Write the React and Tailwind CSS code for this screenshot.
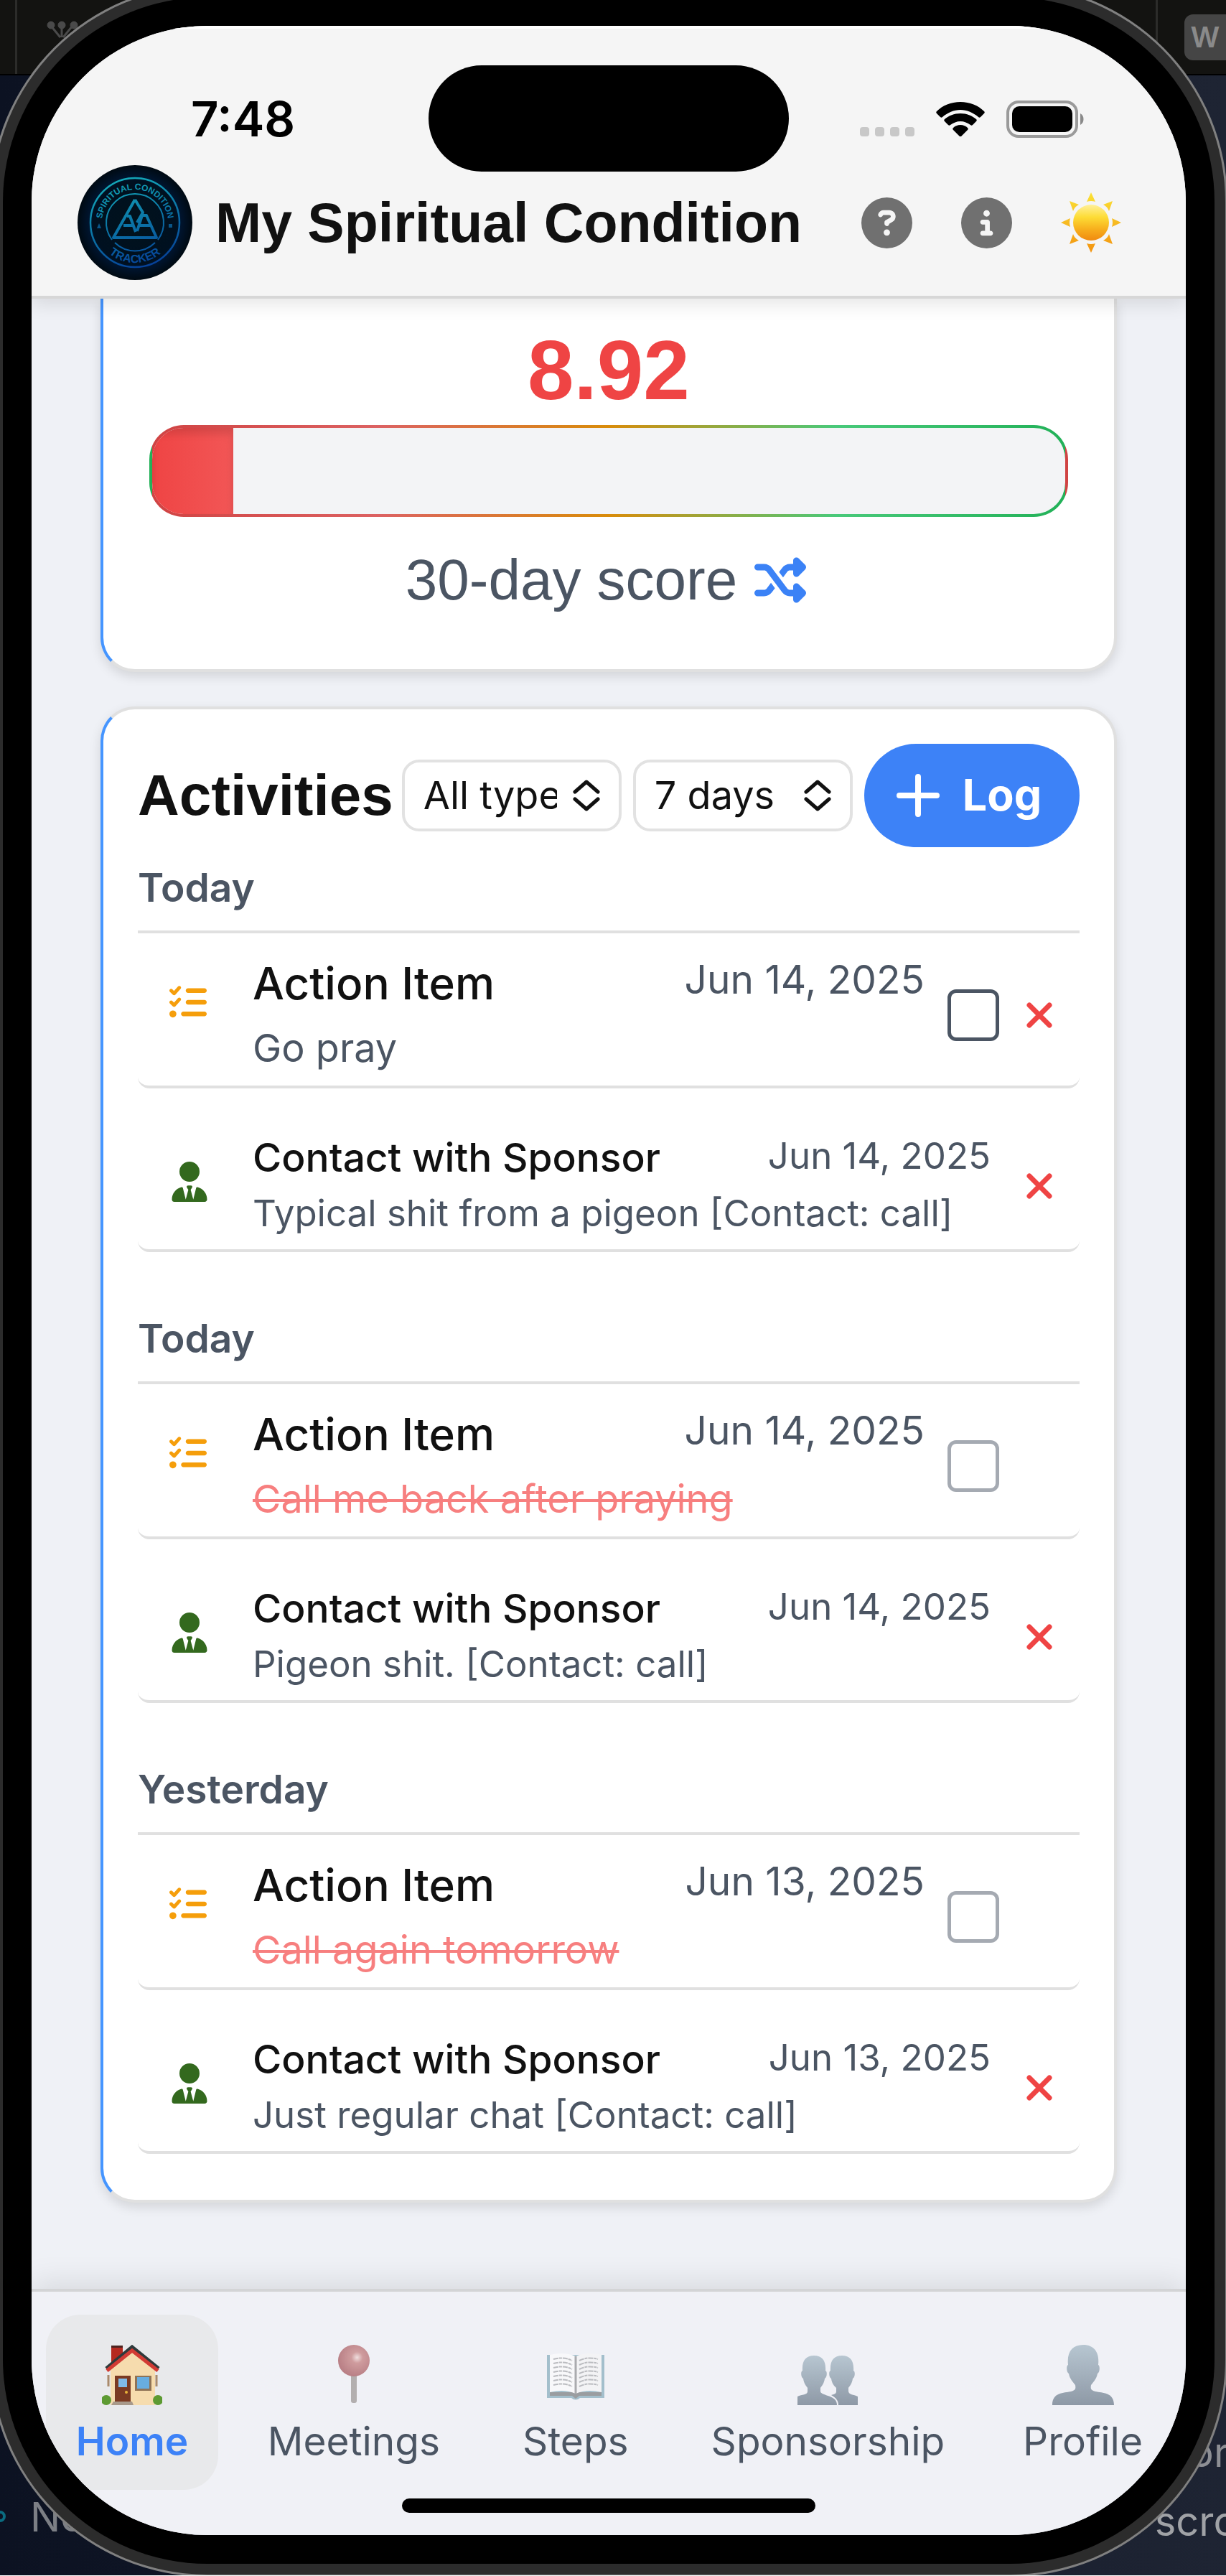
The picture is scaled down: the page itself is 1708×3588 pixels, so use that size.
import React from "react";
import { FaShuffle, FaListCheck, FaUserTie, FaCircleQuestion, FaCircleInfo } from "react-icons/fa6";

const SCORE = 8.92;

const GROUPS = [
  {
    day: "Today",
    action: { text: "Go pray", date: "Jun 14, 2025", done: false },
    contact: { text: "Typical shit from a pigeon [Contact: call]", date: "Jun 14, 2025" },
  },
  {
    day: "Today",
    action: { text: "Call me back after praying", date: "Jun 14, 2025", done: true },
    contact: { text: "Pigeon shit. [Contact: call]", date: "Jun 14, 2025" },
  },
  {
    day: "Yesterday",
    action: { text: "Call again tomorrow", date: "Jun 13, 2025", done: true },
    contact: { text: "Just regular chat [Contact: call]", date: "Jun 13, 2025" },
  },
];

function Logo() {
  return (
    <svg viewBox="0 0 160 160" className="size-40 shrink-0" role="img" aria-label="Spiritual Condition Tracker">
      <defs>
        <radialGradient id="logoBg">
          <stop offset="0" stopColor="#01121c" />
          <stop offset="0.72" stopColor="#001020" />
          <stop offset="0.8" stopColor="#00142e" />
          <stop offset="1" stopColor="#000a12" />
        </radialGradient>
        <linearGradient id="logoLine" gradientUnits="userSpaceOnUse" x1="60" y1="18" x2="100" y2="142">
          <stop offset="0" stopColor="#14a9b8" />
          <stop offset="0.5" stopColor="#0b74a6" />
          <stop offset="1" stopColor="#063f98" />
        </linearGradient>
        <path id="arcTop" d="M34 80 A46 46 0 0 1 126 80" />
        <path id="arcBottom" d="M24 80 A56 56 0 0 0 136 80" />
      </defs>
      <circle cx="80" cy="80" r="80" fill="url(#logoBg)" />
      <g fill="none" stroke="url(#logoLine)">
        <circle cx="80" cy="80" r="62" strokeWidth="2.500" />
        <path d="M48 104 A40 40 0 1 1 112 104 M52 108 A40 40 0 0 0 108 108" strokeWidth="2" />
        <path d="M80 48 L50 101 H110 L96 70 L90 70 L83 92 M80 48 L91 66 L83 80 M69 71 H73 L81 93 M64 84 H77 M87 84 H101" strokeWidth="4" strokeLinejoin="round" />
      </g>
      <g fill="url(#logoLine)" fontFamily="'Liberation Sans', Arial, sans-serif" fontWeight="700">
        <text fontSize="12" textAnchor="middle">
          <textPath href="#arcTop" startOffset="50%">SPIRITUAL CONDITION</textPath>
        </text>
        <text fontSize="16" textAnchor="middle">
          <textPath href="#arcBottom" startOffset="50%">TRACKER</textPath>
        </text>
      </g>
      <path d="M27 88 L30 81 L33 88 Z M127 82 H132 V87 H127 Z" fill="#0a5588" />
    </svg>
  );
}

function WifiIcon() {
  return (
    <svg viewBox="0 0 68 48" className="h-12 w-[68px]" aria-hidden="true">
      <path d="M34 0 C47 0 59 5 67 13 C68 14 68 15 67 16 L62 21 C61 22 60 22 59 21 C52 15 43 11 34 11 C25 11 16 15 9 21 C8 22 7 22 6 21 L1 16 C0 15 0 14 1 13 C9 5 21 0 34 0 Z" />
      <path d="M34 16 C43 16 50 19 56 24 C57 25 57 26 56 27 L51 32 C50 33 49 33 48 32 C44 29 39 27 34 27 C29 27 24 29 20 32 C19 33 18 33 17 32 L12 27 C11 26 11 25 12 24 C18 19 25 16 34 16 Z" />
      <path d="M34 32 C38 32 42 34 44 36 C45 37 45 38 44 39 L35 48 C34.500 48.500 33.500 48.500 33 48 L24 39 C23 38 23 37 24 36 C26 34 30 32 34 32 Z" />
    </svg>
  );
}

function BatteryIcon() {
  return (
    <svg viewBox="0 0 108 52" className="h-[52px] w-[108px]" aria-hidden="true">
      <rect x="2" y="2" width="96" height="48" rx="15" fill="none" stroke="#9a9a9a" strokeWidth="4" />
      <rect x="8" y="8" width="84" height="36" rx="10" />
      <path d="M103 18 C109 21 109 31 103 34 Z" fill="#8a8a8a" />
    </svg>
  );
}

function SunIcon() {
  return (
    <svg viewBox="0 0 84 84" className="size-[84px]" aria-hidden="true">
      <defs>
        <linearGradient id="sunDisc" x1="0" y1="0" x2="0" y2="1">
          <stop offset="0" stopColor="#fff09a" />
          <stop offset="0.35" stopColor="#fddc35" />
          <stop offset="0.7" stopColor="#f7ad1c" />
          <stop offset="1" stopColor="#f08a10" />
        </linearGradient>
        <linearGradient id="sunRay" gradientUnits="userSpaceOnUse" x1="0" y1="0" x2="0" y2="84">
          <stop offset="0" stopColor="#fbe235" />
          <stop offset="1" stopColor="#f3930f" />
        </linearGradient>
      </defs>
      <path
        fill="url(#sunRay)"
        d="M42 0 L48 13 Q42 11 36 13 Z M42 84 L48 71 Q42 73 36 71 Z M0 42 L13 36 Q11 42 13 48 Z M84 42 L71 36 Q73 42 71 48 Z M12 12 L25 17 Q19 20 17 26 Z M72 12 L67 26 Q65 20 59 17 Z M12 72 L17 58 Q19 64 25 67 Z M72 72 L59 67 Q65 64 67 58 Z"
      />
      <circle cx="42" cy="42" r="25" fill="url(#sunDisc)" />
    </svg>
  );
}

function HouseIcon() {
  return (
    <svg viewBox="0 0 84 84" className="size-[84px]" aria-hidden="true">
      <rect x="13" y="2" width="16" height="26" fill="#b5291f" />
      <rect x="13" y="1" width="16" height="3" fill="#4b2420" />
      <path d="M12 34 L43 5 L74 34 V84 H12 Z" fill="#f6dcae" />
      <path d="M9 42 V58 M76 42 V58" stroke="#a98a6c" strokeWidth="3" />
      <path d="M6 33 L42 3 L79 33" fill="none" stroke="#2f3a3b" strokeWidth="5" />
      <path d="M7 36 L42 8 L78 36" fill="none" stroke="#d23b34" strokeWidth="5" />
      <rect x="18" y="43" width="22" height="37" fill="#7a3a22" />
      <rect x="23" y="47" width="12" height="12" fill="#7fbbe8" />
      <circle cx="34" cy="66" r="2" fill="#e8b43a" />
      <rect x="46" y="43" width="23" height="21" fill="#8f7356" />
      <rect x="49" y="45" width="17" height="16" fill="#68addf" />
      <path d="M16 79 H42 L44 84 H13 Z" fill="#a8998a" />
      <circle cx="6" cy="77" r="7" fill="#5d9a32" />
      <circle cx="78" cy="77" r="7" fill="#5d9a32" />
    </svg>
  );
}

function PinIcon() {
  return (
    <svg viewBox="0 0 84 84" className="size-[84px]" aria-hidden="true">
      <defs>
        <radialGradient id="pinHead" cx="0.600" cy="0.400" r="0.600">
          <stop offset="0" stopColor="#f0dede" />
          <stop offset="0.3" stopColor="#cf9c9e" />
          <stop offset="1" stopColor="#b98086" />
        </radialGradient>
      </defs>
      <rect x="38" y="38" width="8" height="43" rx="3" fill="#b3afaf" />
      <circle cx="42" cy="22" r="22" fill="url(#pinHead)" />
    </svg>
  );
}

function BookIcon() {
  const lines = [22, 28, 34, 40, 46, 52, 58];
  return (
    <svg viewBox="0 0 84 84" className="size-[84px]" aria-hidden="true">
      <path d="M2 14 H82 V74 H48 Q42 79 36 74 H2 Z" fill="#a3bfcc" />
      <path d="M6 66 H78 V71 H47 L42 75 L37 71 H6 Z" fill="#9a9da0" />
      <path d="M6 14 Q26 9 42 16 V68 Q26 61 6 66 Z" fill="#f8f8fa" />
      <path d="M78 14 Q58 9 42 16 V68 Q58 61 78 66 Z" fill="#f3f3f5" />
      <path d="M42 16 V68" stroke="#aaabae" strokeWidth="3" />
      <g stroke="#bbbcc0" strokeWidth="2" strokeDasharray="7 1 4 1">
        {lines.map((y) => (
          <path key={y} d={`M11 ${y - 2} Q26 ${y - 6} 37 ${y} M47 ${y} Q58 ${y - 6} 73 ${y - 2}`} fill="none" />
        ))}
      </g>
    </svg>
  );
}

function PeopleGradient({ id }) {
  return (
    <linearGradient id={id} x1="0" y1="0" x2="0" y2="1">
      <stop offset="0" stopColor="#b7c6d1" />
      <stop offset="1" stopColor="#8e99a6" />
    </linearGradient>
  );
}

function PeopleIcon() {
  return (
    <svg viewBox="0 0 84 84" className="size-[84px]" aria-hidden="true">
      <defs><PeopleGradient id="people" /></defs>
      <path fill="url(#people)" d="M23 15 C35 15 40 23 39 36 C42 37 41 46 38 47 C37 54 34 57 32 60 V65 C33 70 46 70 52 76 C54 78 55 81 55 84 H0 V72 C6 69 14 70 14 65 V60 C12 57 9 54 8 47 C5 46 4 37 7 36 C6 23 11 15 23 15 Z" />
      <path fill="url(#people)" d="M62 15 C74 15 79 23 78 36 C81 37 80 46 77 47 C76 54 73 57 71 60 V65 C72 70 78 69 84 72 V84 H57 C57 78 54 74 47 70 C51 69 54 68 54 65 V60 C51 57 48 54 47 47 C44 46 43 37 46 36 C45 23 50 15 62 15 Z" />
    </svg>
  );
}

function PersonIcon() {
  return (
    <svg viewBox="0 0 86 84" className="h-[84px] w-[86px]" aria-hidden="true">
      <defs><PeopleGradient id="person" /></defs>
      <path fill="url(#person)" d="M43 0 C58 0 66 10 64 28 C67 29 66 39 63 40 C62 47 57 52 54 56 C53 62 54 63 60 65 C70 67 86 66 86 84 H0 C0 66 16 67 26 65 C32 63 33 62 32 56 C29 52 24 47 23 40 C20 39 19 29 22 28 C20 10 28 0 43 0 Z" />
    </svg>
  );
}

function CloseButton({ label }) {
  return (
    <button type="button" aria-label={label} className="flex size-16 items-center justify-center">
      <svg viewBox="0 0 36 36" className="size-9" aria-hidden="true">
        <path d="M4 4 L32 32 M32 4 L4 32" stroke="#ef4444" strokeWidth="7" strokeLinecap="round" />
      </svg>
    </button>
  );
}

function FilterSelect({ label, options }) {
  return (
    <label className="relative block min-w-0 flex-1">
      <span className="sr-only">{label}</span>
      <select className="block h-[100px] w-full appearance-none rounded-3xl border-4 border-[#e2e2e2] bg-white pl-[26px] pr-[86px] text-[54px] leading-[80px] text-[#111]">
        {options.map((o) => (
          <option key={o}>{o}</option>
        ))}
      </select>
      <svg viewBox="0 0 38 44" className="pointer-events-none absolute right-[30px] top-7 h-11 w-[38px]" aria-hidden="true">
        <path d="M3 17 L19 3 L35 17 M3 27 L19 41 L35 27" fill="none" stroke="#111" strokeWidth="5" strokeLinecap="round" strokeLinejoin="round" />
      </svg>
    </label>
  );
}

function ActionRow({ item }) {
  return (
    <li className="flex rounded-2xl border-b-4 border-[#e0e0e0] bg-white">
      <FaListCheck className="ml-11 mt-[54px] size-[52px] shrink-0 text-[#f59e0b]" aria-hidden="true" />
      <div className="ml-16 min-w-0 flex-1 pb-3 pt-3">
        <div className="flex items-start justify-between">
          <h4 className="text-[62px] font-medium leading-[84px] text-[#111]">Action Item</h4>
          <time className="text-[55px] leading-[72px] text-[#4b5563]">{item.date}</time>
        </div>
        <p
          className={
            item.done
              ? "mt-2 text-[54px] leading-[80px] text-[#f77f7f] line-through decoration-4"
              : "mt-2 text-[54px] leading-[80px] text-[#4b5563]"
          }
        >
          {item.text}
        </p>
      </div>
      <div className="ml-8 flex w-[184px] shrink-0 items-center gap-6">
        <input
          type="checkbox"
          aria-label={`Mark "${item.text}" as done`}
          className={
            item.done
              ? "size-[72px] appearance-none rounded-xl border-5 border-[#a5aab2] bg-white"
              : "size-[72px] appearance-none rounded-xl border-5 border-[#4b5563] bg-white"
          }
        />
        {!item.done && <CloseButton label={`Delete ${item.text}`} />}
      </div>
    </li>
  );
}

function ContactRow({ item }) {
  return (
    <li className="mt-12 flex rounded-2xl border-b-4 border-[#e0e0e0] bg-white">
      <FaUserTie className="ml-11 mt-[54px] size-14 shrink-0 text-[#33691e]" aria-hidden="true" />
      <div className="ml-[60px] min-w-0 flex-1 pb-3 pt-2">
        <div className="flex items-start justify-between">
          <h4 className="text-[55px] font-medium leading-[80px] text-[#111]">Contact with Sponsor</h4>
          <time className="text-[51px] leading-[76px] text-[#4b5563]">{item.date}</time>
        </div>
        <p className="truncate text-[51px] leading-[76px] text-[#4b5563]">{item.text}</p>
      </div>
      <div className="ml-9 flex w-[88px] shrink-0 items-center">
        <CloseButton label={`Delete ${item.text}`} />
      </div>
    </li>
  );
}

const NAV = [
  { label: "Home", Icon: HouseIcon, active: true },
  { label: "Meetings", Icon: PinIcon },
  { label: "Steps", Icon: BookIcon },
  { label: "Sponsorship", Icon: PeopleIcon },
  { label: "Profile", Icon: PersonIcon },
];

function Desktop() {
  return (
    <div className="absolute inset-0 bg-linear-to-r from-[#0c1222] to-[#1e2433] font-[Inter,sans-serif]" aria-hidden="true">
      <div className="flex h-[105px] justify-between border-b-2 border-black bg-[#131311]">
        <div className="w-6 border-r-3 border-[#2c2c2a]" />
        <div className="flex w-[98px] items-center justify-end border-l-3 border-[#2c2c2a]">
          <span className="flex h-16 w-[58px] items-center justify-center rounded-l-xl bg-[#454545] text-[40px] font-semibold text-[#8a8a8a]">W</span>
        </div>
      </div>
      <svg viewBox="0 0 60 50" className="absolute left-16 top-7 h-[50px] w-[60px]">
        <g fill="#4a4a4a" stroke="#4a4a4a">
          <circle cx="7" cy="7" r="5" /><circle cx="22" cy="7" r="5" /><circle cx="39" cy="7" r="5" />
          <path d="M7 8 L20 24 M22 8 V24 M37 8 L24 24" strokeWidth="3" />
        </g>
      </svg>
      <span className="absolute -left-2 bottom-[74px] size-4 rounded-full border-4 border-[#0b6b80]" />
      <span className="absolute bottom-[46px] left-[42px] text-[56px] leading-[70px] text-[#7c7f85]">No</span>
      <span className="absolute -right-1 bottom-[136px] text-[56px] leading-[70px] text-[#8d8f94]">or</span>
      <span className="absolute -right-4 bottom-[40px] text-[56px] leading-[70px] text-[#a0a2a6]">scro</span>
    </div>
  );
}

export default function App() {
  return (
    <div className="relative overflow-hidden">
      <Desktop />
      <div className="relative -mb-0.5 -ml-[14px] -mr-0.5 -mt-[22px] rounded-[303px] bg-[#808080] p-[3px] font-[Inter,sans-serif]">
        <div className="rounded-[300px] bg-[#2c2c2c] p-[15px]">
          <div className="rounded-[285px] bg-black p-10">
            <div className="overflow-hidden rounded-[245px] bg-[#eff1f6]">
              <header className="relative border-b-4 border-t-4 border-b-[#d7d7d7] border-t-white bg-[#f5f5f5] pb-[22px] shadow-[0_8px_24px_rgba(0,0,0,0.1)]">
                <div className="absolute left-1/2 top-[51px] h-[148px] w-[502px] -translate-x-1/2 rounded-full bg-black" />
                <div className="flex items-center justify-between pl-[222px] pr-[142px] pt-[76px]">
                  <time className="text-[67px] font-semibold leading-[100px] text-black">7:48</time>
                  <div className="flex items-center gap-[30px]">
                    <div className="flex h-12 items-end gap-2">
                      <i className="size-[13px] rounded-sm bg-[#c8c8c8]" />
                      <i className="size-[13px] rounded-sm bg-[#c8c8c8]" />
                      <i className="size-[13px] rounded-sm bg-[#c8c8c8]" />
                      <i className="size-[13px] rounded-sm bg-[#c8c8c8]" />
                    </div>
                    <WifiIcon />
                    <BatteryIcon />
                  </div>
                </div>
                <div className="mt-[14px] flex items-center pl-16 pr-[90px]">
                  <Logo />
                  <h1 className="ml-8 flex-1 whitespace-nowrap font-['Liberation_Sans',Arial,sans-serif] text-[77px] font-bold leading-[92px] text-[#111]">
                    My Spiritual Condition
                  </h1>
                  <div className="flex items-center gap-[68px] text-[#707070]">
                    <button type="button" aria-label="Help"><FaCircleQuestion className="size-[71px]" /></button>
                    <button type="button" aria-label="About"><FaCircleInfo className="size-[71px]" /></button>
                    <button type="button" aria-label="Light theme"><SunIcon /></button>
                  </div>
                </div>
              </header>

              <main className="px-24 pb-[120px]">
                <section className="rounded-b-[48px] border-x-4 border-b-4 border-[#e0e0e0] border-l-[#4595ff] bg-white px-16 pb-[76px] pt-10 text-center font-['Liberation_Sans',Arial,sans-serif] shadow-[0_6px_16px_rgba(0,0,0,0.12)]">
                  <p className="text-[116px] font-bold leading-[120px] text-[#ef4444]">{SCORE}</p>
                  <div
                    role="progressbar"
                    aria-label="30-day score"
                    aria-valuenow={SCORE}
                    className="mt-4 h-32 overflow-hidden rounded-[48px] border-4 border-transparent bg-[linear-gradient(#f3f4f6,#f3f4f6),linear-gradient(90deg,#d04343,#dc6262_25%,#d98c0a_50%,#48c97a_75%,#22b158)] [background-clip:padding-box,border-box]"
                  >
                    <div className="h-full bg-linear-to-r from-[#ef4444] to-[#f25656] shadow-[inset_0_8px_12px_rgba(0,0,0,0.12)]" style={{ width: `${SCORE}%` }} />
                  </div>
                  <p className="mt-10 flex items-center justify-center gap-6 pr-2 text-[80px] leading-[96px] text-[#4b5563]">
                    30-day score
                    <button type="button" aria-label="Change period"><FaShuffle className="size-[72px] text-[#3b82f6]" /></button>
                  </p>
                </section>

                <section className="mt-12 rounded-[48px] border-4 border-[#e0e0e0] border-l-[#4595ff] bg-white px-12 pb-16 pt-12 shadow-[0_6px_16px_rgba(0,0,0,0.12)]">
                  <div className="flex items-center gap-3">
                    <h2 className="font-['Liberation_Sans',Arial,sans-serif] text-[80px] font-bold leading-[96px] text-[#111]">Activities</h2>
                    <div className="flex min-w-0 flex-1 items-center gap-4">
                      <FilterSelect label="Activity type" options={["All types", "Action items", "Contacts"]} />
                      <FilterSelect label="Period" options={["7 days", "30 days", "90 days"]} />
                      <button type="button" className="flex h-36 w-[300px] shrink-0 items-center justify-center gap-8 rounded-full bg-[#3d82f7] pr-2 text-[61px] font-bold text-white">
                        <svg viewBox="0 0 60 60" className="size-[60px]" aria-hidden="true">
                          <path d="M30 4 V56 M4 30 H56" stroke="currentColor" strokeWidth="8" strokeLinecap="round" />
                        </svg>
                        Log
                      </button>
                    </div>
                  </div>
                  {GROUPS.map((g, i) => (
                    <div key={i} className={i === 0 ? "mt-4" : "mt-20"}>
                      <h3 className="border-b-4 border-[#e0e0e0] pb-5 text-[55px] font-semibold leading-[80px] text-[#4b5563]">{g.day}</h3>
                      <ul className="mt-4">
                        <ActionRow item={g.action} />
                        <ContactRow item={g.contact} />
                      </ul>
                    </div>
                  ))}
                </section>
              </main>

              <footer className="relative border-t-4 border-[#d3d4d6] bg-[#f0f1f6] pb-[31px] pt-8 shadow-[0_-8px_40px_rgba(0,0,0,0.1)]">
                <nav className="flex justify-between px-5">
                  {NAV.map(({ label, Icon, active }) => (
                    <a
                      key={label}
                      href="#"
                      className={
                        active
                          ? "flex h-[244px] min-w-60 flex-col items-center gap-2.5 rounded-[48px] bg-[#e8e9eb] px-10 pt-[42px] text-[55px] font-semibold leading-[80px] text-[#3d82f7]"
                          : "flex h-[244px] min-w-60 flex-col items-center gap-2.5 rounded-[48px] px-10 pt-[42px] text-[55px] leading-[80px] text-[#4b5563]"
                      }
                    >
                      <Icon />
                      {label}
                    </a>
                  ))}
                </nav>
                <div className="mx-auto mt-3 h-5 w-[576px] rounded-full bg-black" />
              </footer>
            </div>
          </div>
        </div>
      </div>
    </div>
  );
}
